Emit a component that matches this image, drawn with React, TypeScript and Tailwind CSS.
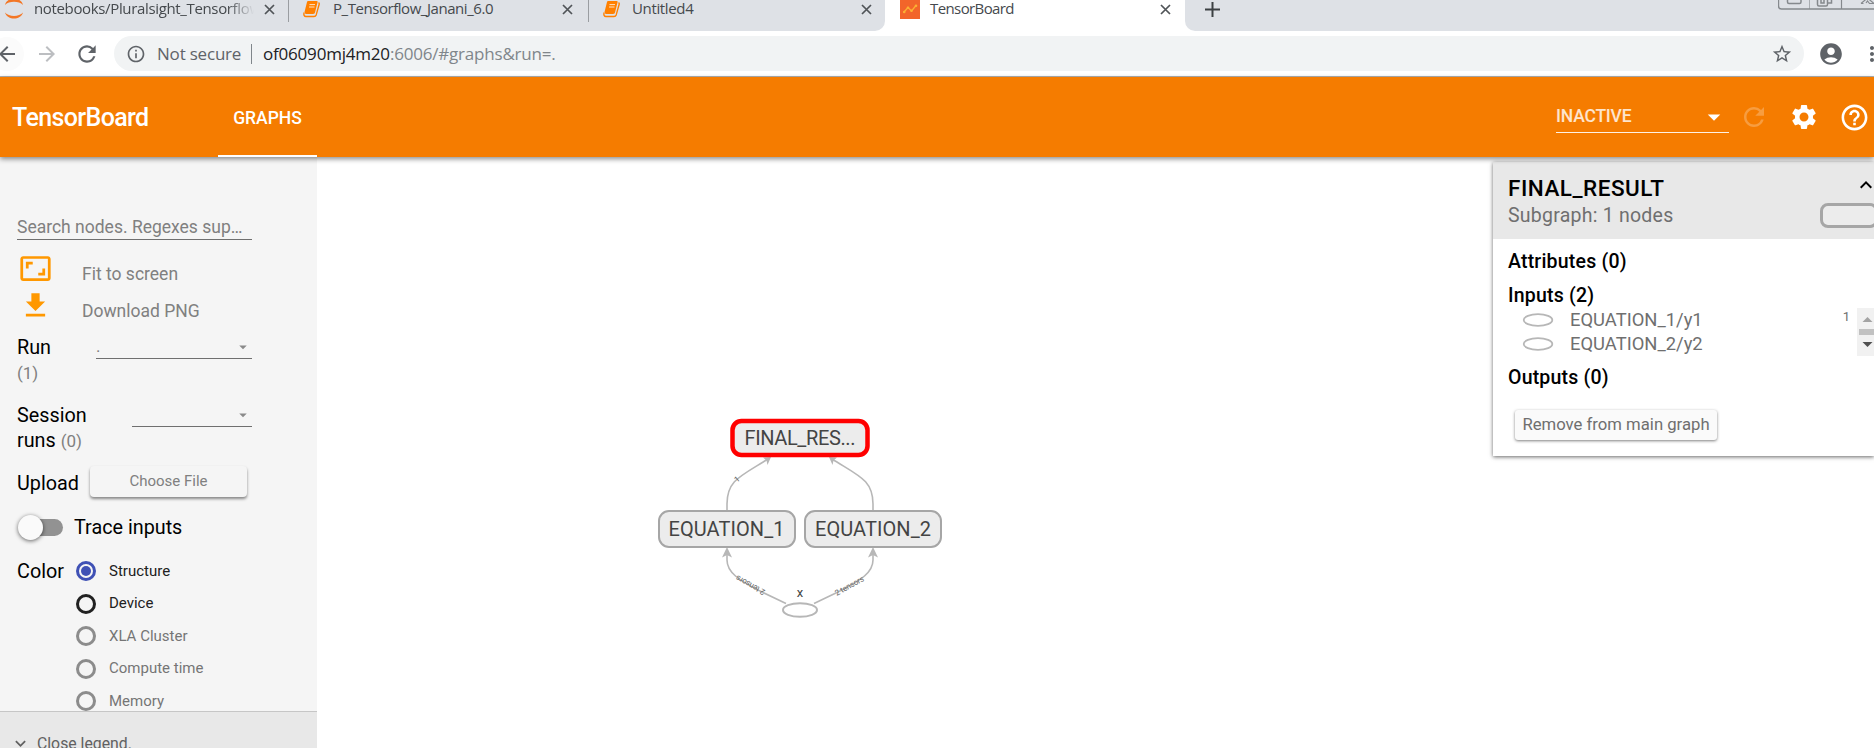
import type { ReactNode } from 'react';
import { MdAccountCircle, MdArrowBack, MdArrowDropDown, MdArrowForward, MdAspectRatio, MdExpandLess, MdExpandMore, MdGetApp, MdHelpOutline, MdInfoOutline, MdMoreVert, MdRefresh, MdSettings, MdStarBorder } from 'react-icons/md';

function CloseGlyph() {
  return (
    <svg className="size-[11px] shrink-0" viewBox="0 0 11 11" fill="none" stroke="#505458" strokeWidth="1.7">
      <path d="M1 1L10 10M10 1L1 10" />
    </svg>
  );
}

function NotebookIcon() {
  return (
    <svg className="h-[18px] w-[17px] shrink-0" viewBox="0 0 17 18">
      <path d="M5 1H13.500c.9 0 1.300.5 1 1.400L12 12.500c-.3 1-.8 1.400-1.800 1.400H2.500L1.500 12L4 2C4.200 1.300 4.500 1 5 1z" fill="#ff8000" />
      <path d="M1.200 12.500c-.8 2.300 0 4 1.800 4H11c1.200 0 1.800-.5 2.200-1.600L16.100 4.500c.3-.9 0-1.500-.6-1.800" fill="none" stroke="#ff8000" strokeWidth="1.400" />
      <path d="M6.500 4.600h5.500M6 7h5.500" stroke="#ffe3c4" strokeWidth="1" />
    </svg>
  );
}

function JupyterIcon() {
  return (
    <svg className="h-[19px] w-[20px] shrink-0" viewBox="0 0 20 19" fill="#f37726">
      <path d="M1 5C2.500-3.500 17.500-3.500 19 5C15 .8 5 .8 1 5z" />
      <path d="M1 12.500C5 17 15 17 19 12.500C16.500 20.500 3.500 20.500 1 12.500z" />
    </svg>
  );
}

function TabTitle({ children, className }: { children: ReactNode; className: string }) {
  return <span className={`-mt-[2px] whitespace-nowrap text-[15px] leading-[20px] text-[#45494d] ${className}`}>{children}</span>;
}

function TabStrip() {
  return (
    <div className="flex h-[31px] bg-white font-['Open_Sans',sans-serif]">
      <div className="flex h-[31px] w-[885px] rounded-br-[10px] bg-[#dee1e6]">
        <div className="flex h-[22px] w-[289px] items-center border-r border-[#9a9da1] pb-1 pl-1">
          <JupyterIcon />
          <TabTitle className="ml-[10px] w-[220px] overflow-hidden tracking-[-0.350px] [mask-image:linear-gradient(to_right,black_88%,transparent)]">notebooks/Pluralsight_Tensorflow</TabTitle>
          <span className="ml-[10px] flex"><CloseGlyph /></span>
        </div>
        <div className="flex h-[22px] w-[300px] items-center border-r border-[#9a9da1] pb-1 pl-[14px]">
          <NotebookIcon />
          <TabTitle className="ml-[13px] w-[229px] tracking-[-0.450px]">P_Tensorflow_Janani_6.0</TabTitle>
          <CloseGlyph />
        </div>
        <div className="flex h-[22px] items-center pb-1 pl-[14px]">
          <NotebookIcon />
          <TabTitle className="ml-[12px] w-[229px] tracking-[-0.350px]">Untitled4</TabTitle>
          <CloseGlyph />
        </div>
      </div>
      <div className="flex h-[22px] w-[300px] items-center pb-1 pl-[15px]">
        <svg className="h-5 w-5 shrink-0" viewBox="0 0 20 20">
          <rect width="20" height="20" fill="#f2652a" />
          <path d="M4 13L8 8.500L11.500 12L16 6.500" fill="none" stroke="#fbb034" strokeWidth="1.300" />
          <g fill="#fbb034"><circle cx="4.200" cy="13" r="1.300" /><circle cx="8" cy="8.700" r="1.300" /><circle cx="11.500" cy="11.800" r="1.300" /><circle cx="16" cy="6.800" r="1.300" /></g>
        </svg>
        <TabTitle className="ml-[10px] w-[230px] tracking-[-0.600px]">TensorBoard</TabTitle>
        <CloseGlyph />
      </div>
      <div className="flex h-[31px] grow justify-between overflow-hidden rounded-bl-[10px] bg-[#dee1e6]">
        <svg className="mt-[2px] ml-[20px] size-[15px]" viewBox="0 0 15 15" stroke="#3c4043" strokeWidth="2">
          <path d="M7.500 0V15M0 7.500H15" />
        </svg>
        <svg className="h-[10px] w-[96px]" viewBox="0 0 96 10" fill="none" stroke="#85898d">
          <path d="M.5 0V6Q.5 9 3.500 9H96" strokeWidth="1.400" />
          <path d="M31.500 0V9" strokeWidth="0.600" />
          <path d="M63.500 0V9" strokeWidth="1.200" />
          <path d="M9.500 0V2Q9.500 3.500 11 3.500H21.500Q23 3.500 23 2V0" strokeWidth="1.500" />
          <path d="M39.500 0V4.500Q39.500 6 41 6H48Q49.500 6 49.500 4.500V0M43 0V3H46V0M50 3H53.500V0" strokeWidth="1.500" />
          <path d="M83 3.500L89.500-2L96 3.500M85.500 3.500H83M88 3L89.500 1L91.500 3.500H96" strokeWidth="1.200" />
        </svg>
      </div>
    </div>
  );
}

function AddressBar() {
  return (
    <div className="flex h-[46px] items-center border-b border-[#b0b0b0] bg-white font-['Open_Sans',sans-serif] text-[#5f6368]">
      <div className="-ml-[10px] flex size-[34px] shrink-0 items-center justify-center rounded-full bg-[#fbfbfb]"><MdArrowBack className="size-[24px]" /></div>
      <MdArrowForward className="ml-[11px] size-[24px] shrink-0 text-[#bcbec1]" />
      <MdRefresh className="ml-[15px] size-[26px] shrink-0" />
      <div className="ml-[14px] flex h-[35px] w-[1690px] shrink-0 items-center rounded-full bg-[#f1f3f4] pl-[12px]">
        <MdInfoOutline className="size-[20px] shrink-0" />
        <span className="ml-[11px] w-[94px] text-[17px] tracking-[-0.200px] whitespace-nowrap">Not secure</span>
        <span className="h-[20px] w-px bg-[#80868b]" />
        <span className="ml-[11px] text-[17px] tracking-[-0.200px] whitespace-nowrap text-[#80868b]"><span className="text-[#202124]">of06090mj4m20</span>:6006/#graphs&amp;run=.</span>
        <MdStarBorder className="mr-[11px] ml-auto size-[22px]" />
      </div>
      <MdAccountCircle className="ml-[14px] size-[26px] shrink-0" />
      <MdMoreVert className="ml-[16px] size-[24px] shrink-0" />
    </div>
  );
}

function Header() {
  return (
    <header className="relative z-20 flex h-20 bg-[#f57c00] text-white shadow-[0_2px_5px_rgba(0,0,0,0.45)]">
      <h1 className="ml-[12px] w-[206px] pt-[2px] text-[25px] leading-[77px] font-medium tracking-[-0.625px]">TensorBoard</h1>
      <div className="w-[99px] border-b-2 border-white text-center text-[17.500px] leading-[82px] font-medium">GRAPHS</div>
      <div className="mt-[27px] ml-auto flex h-[29px] w-[173px] shrink-0 items-center justify-between border-b border-white/90">
        <span className="-mt-[3px] text-[17.500px] font-medium tracking-[-0.200px] text-white/80">INACTIVE</span>
        <MdArrowDropDown className="-mt-[3px] size-[30px]" />
      </div>
      <div className="-mr-[5px] flex shrink-0 items-center">
        <div className="flex w-[50px] justify-center"><MdRefresh className="size-[30px] text-white/25" /></div>
        <div className="flex w-[50px] justify-center"><MdSettings className="size-[30px]" /></div>
        <div className="flex w-[50px] justify-center"><MdHelpOutline className="size-[31px]" /></div>
      </div>
    </header>
  );
}

function Select({ className, value }: { className: string; value?: string }) {
  return (
    <div className={`-mt-px flex h-[25px] items-center justify-between border-b border-[#6f6f6f] text-[17px] text-[#808080] ${className}`}>
      <span>{value}</span>
      <MdArrowDropDown className="mt-[2px] size-[18px] text-[#8a8a8a]" />
    </div>
  );
}

const colorModes = [
  { label: 'Structure', ring: 'border-[#3f51b5]', text: 'text-[#212121]', checked: true },
  { label: 'Device', ring: 'border-[#212121]', text: 'text-[#212121]', checked: false },
  { label: 'XLA Cluster', ring: 'border-[#8c8c8c]', text: 'text-[#757575]', checked: false },
  { label: 'Compute time', ring: 'border-[#8c8c8c]', text: 'text-[#757575]', checked: false },
  { label: 'Memory', ring: 'border-[#8c8c8c]', text: 'text-[#757575]', checked: false },
];

function Sidebar() {
  return (
    <aside className="flex h-[591px] w-[317px] shrink-0 flex-col overflow-hidden bg-[#f5f5f5] text-[19.800px] leading-[25px] text-black">
      <div className="flex h-[554px] shrink-0 flex-col overflow-hidden pl-[17px] [&>*]:shrink-0">
        <div className="mt-[56px] h-[27px] w-[235px] border-b border-[#6f6f6f] text-[17.500px] leading-[29px] whitespace-nowrap text-[#808080]">Search nodes. Regexes sup…</div>
        <div className="mt-[12px] flex h-[37px] text-[17.500px] text-[#808080]">
          <MdAspectRatio className="ml-[2px] size-[33px] text-[#ff9800]" />
          <span className="mt-[10px] ml-[30px]">Fit to screen</span>
        </div>
        <div className="flex h-[37px] text-[17.500px] text-[#808080]">
          <MdGetApp className="ml-[2px] size-[33px] text-[#ff9800]" />
          <span className="mt-[10px] ml-[30px]">Download PNG</span>
        </div>
        <div className="mt-[9px] flex h-[50px]">
          <div className="w-[79px]">Run<br /><span className="text-[17px] text-[#808080]">(1)</span></div>
          <Select className="w-[156px]" value="." />
        </div>
        <div className="mt-[18px] flex h-[50px]">
          <div className="w-[115px]">Session<br />runs <span className="text-[17px] text-[#808080]">(0)</span></div>
          <Select className="w-[120px]" />
        </div>
        <div className="mt-[13px] flex h-[31px]">
          <span className="w-[73px] pt-[5px]">Upload</span>
          <span className="w-[157px] rounded-[4px] bg-[#f5f5f5] pt-[3px] text-center text-[15px] text-[#808080] shadow-[0_2px_3px_rgba(0,0,0,0.45)]">Choose File</span>
        </div>
        <div className="mt-[17px] flex h-[26px] items-center">
          <div className="flex h-[17px] w-[46px] items-center rounded-full bg-gradient-to-r from-transparent from-30% to-[#929292] to-30%">
            <span className="ml-px size-[25px] rounded-full bg-[#fafafa] shadow-[0_1px_4px_rgba(0,0,0,0.6)]" />
          </div>
          <span className="ml-[11px]">Trace inputs</span>
        </div>
        <div className="mt-[15px] flex">
          <span className="w-[59px] pt-[4px]">Color</span>
          <div>
            {colorModes.map((mode) => (
              <div key={mode.label} className={`flex h-[32.500px] items-center text-[15px] ${mode.text}`}>
                <span className={`flex size-[20px] items-center justify-center rounded-full border-[3px] ${mode.ring}`}>
                  {mode.checked && <span className="size-[10px] rounded-full bg-[#3f51b5]" />}
                </span>
                <span className="ml-[13px]">{mode.label}</span>
              </div>
            ))}
          </div>
        </div>
      </div>
      <div className="flex h-[64px] shrink-0 border-t border-[#c6c6c6] bg-[#e8e8e8] pt-[18px] pl-[10px] text-[15.800px] text-[#616161]">
        <MdExpandMore className="mt-[3px] size-[21px]" />
        <span className="mt-px ml-[6px] h-[26px] leading-[26px]">Close legend.</span>
      </div>
    </aside>
  );
}

function Graph() {
  return (
    <svg className="h-[230px] w-[320px]" viewBox="640 400 320 230" fontFamily="Roboto, sans-serif">
      <g fill="none" stroke="#b7b7b7" strokeWidth="1.600">
        <path d="M727 510V504C727 480 741 476 768 459" />
        <path d="M873 510V504C873 480 859 476 832 459" />
        <path d="M786 603.500L762 592C738 580 727 572 727 560V553" />
        <path d="M814 603.500L838 592C862 580 873 572 873 560V553" />
        <ellipse cx="800" cy="610" rx="17" ry="6.800" fill="#fff" strokeWidth="2" />
      </g>
      <g fill="#b7b7b7">
        <path d="M771 457L767.500 465L766.500 460.500L763 457.500Z" />
        <path d="M829 457L832.500 465L833.500 460.500L837 457.500Z" />
        <path d="M727 547L732 557.500L727 555L722 557.500Z" />
        <path d="M873 547L878 557.500L873 555L868 557.500Z" />
      </g>
      <rect x="732.500" y="421" width="135" height="34" rx="9" fill="#ececec" stroke="#f00" strokeWidth="4.500" />
      <g fill="#ececec" stroke="#a6a6a6" strokeWidth="2">
        <rect x="659" y="511" width="136" height="36" rx="10" />
        <rect x="805" y="511" width="136" height="36" rx="10" />
      </g>
      <g fill="#444" fontSize="20" textAnchor="middle">
        <text x="800" y="445" textLength="111">FINAL_RES...</text>
        <text x="726.500" y="536" textLength="116">EQUATION_1</text>
        <text x="873" y="536" textLength="116">EQUATION_2</text>
        <text x="800" y="597" fontSize="13">x</text>
      </g>
      <g fill="#666" fontSize="8" textAnchor="middle">
        <text transform="translate(750.500 585) rotate(209)" y="2.500" textLength="32">2 tensors</text>
        <text transform="translate(849.500 586) rotate(-29)" y="2.500" textLength="32">2 tensors</text>
        <text transform="translate(737 479.500) rotate(-40)" y="2.500">1</text>
      </g>
    </svg>
  );
}

function InputRow({ name }: { name: string }) {
  return (
    <div className="flex h-[24px] items-center text-[18.400px] text-[#6f6f6f]">
      <svg className="h-[14px] w-[32px]" viewBox="0 0 32 14"><ellipse cx="16" cy="7" rx="14.300" ry="5.800" fill="#fff" stroke="#b7b7b7" strokeWidth="1.800" /></svg>
      <span className="-mt-px ml-[16px]">{name}</span>
    </div>
  );
}

function InfoPanel() {
  return (
    <section className="mt-[5px] h-[294px] w-[381px] shrink-0 bg-white text-[19.500px] leading-[25px] text-black shadow-[0_1px_4px_rgba(0,0,0,0.6)]">
      <div className="flex h-[77px] bg-[#e8e8e8] pl-[15px]">
        <div className="w-[312px] pt-[13px]">
          <h2 className="text-[22.500px] leading-[26px] font-medium tracking-[0.500px]">FINAL_RESULT</h2>
          <p className="leading-[29px] tracking-[0.240px] text-[#6f6f6f]">Subgraph: 1 nodes</p>
        </div>
        <div className="w-[54px] overflow-hidden">
          <MdExpandLess className="mt-[11px] ml-[34px] size-[24px]" />
          <div className="mt-[6px] h-[25px] w-[58px] rounded-[8px] border-[3px] border-[#a6a6a6] bg-[#ececec]" />
        </div>
      </div>
      <div className="pl-[15px] font-medium tracking-[0.200px]">
        <div className="pt-[10px]">Attributes (0)</div>
        <div className="pt-[9px]">Inputs (2)</div>
      </div>
      <div className="flex h-[48px] justify-between pl-[29px]">
        <div><InputRow name="EQUATION_1/y1" /><InputRow name="EQUATION_2/y2" /></div>
        <div className="flex">
          <span className="mr-[7px] text-[13px] leading-[17px] text-[#6f6f6f]">1</span>
          <svg className="h-[48px] w-[17px]" viewBox="0 0 17 48">
            <rect width="17" height="48" fill="#f1f1f1" />
            <path d="M5.500 14L10.500 9L15.500 14Z" fill="#a3a3a3" />
            <rect x="2" y="21" width="15" height="6" fill="#c1c1c1" />
            <path d="M5.500 34L10.500 39L15.500 34Z" fill="#505050" />
          </svg>
        </div>
      </div>
      <div className="pt-[9px] pl-[15px] font-medium tracking-[0.200px]">Outputs (0)</div>
      <div className="mt-[20px] ml-[22px] h-[30px] w-[202px] rounded-[3px] bg-[#fafafa] text-center text-[16.700px] leading-[30px] text-[#6f6f6f] shadow-[0_1px_3px_rgba(0,0,0,0.5)]">Remove from main graph</div>
    </section>
  );
}

export default function App() {
  return (
    <div className="h-[748px] w-[1874px] overflow-hidden bg-white font-['Roboto',sans-serif]">
      <TabStrip />
      <AddressBar />
      <Header />
      <main className="flex h-[591px]">
        <Sidebar />
        <div className="w-[1176px] shrink-0 pt-[243px] pl-[323px]"><Graph /></div>
        <InfoPanel />
      </main>
    </div>
  );
}
